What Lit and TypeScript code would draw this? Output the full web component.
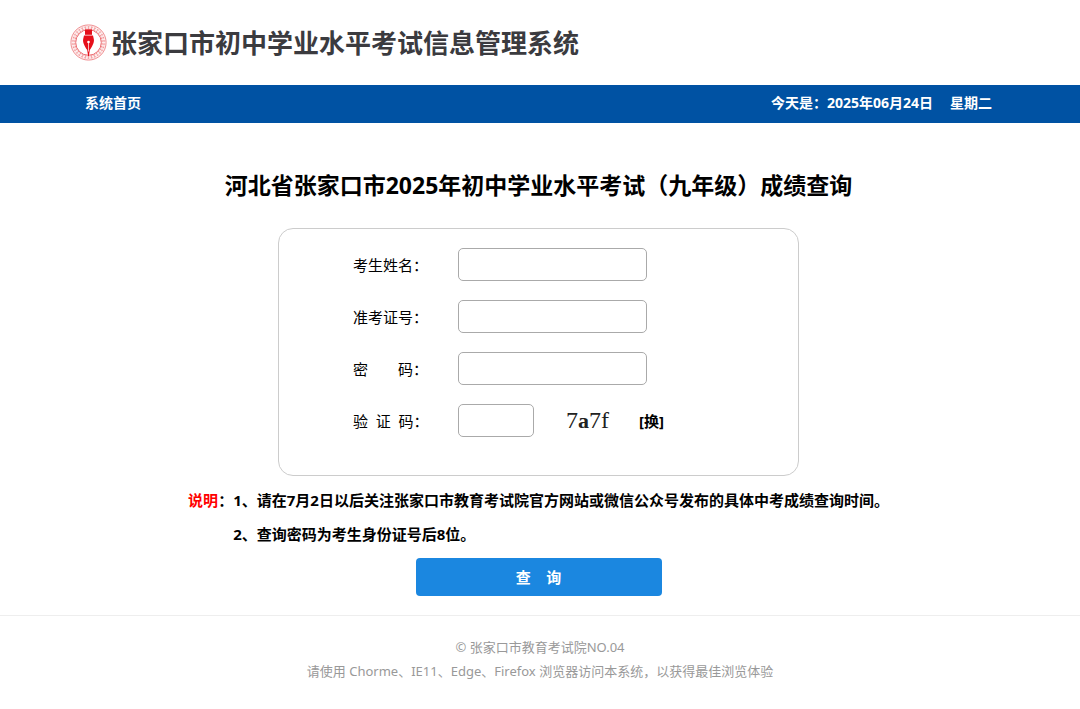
import { LitElement, html, css, svg } from "lit";
import { customElement, property } from "lit/decorators.js";

const ring = Array.from({ length: 30 }, (_, i) => i * 12);

@customElement("site-logo")
class SiteLogo extends LitElement {
  static styles = css`
    :host { display: block; flex: none; width: 37px; height: 37px; }
    svg { display: block; width: 100%; height: 100%; }
  `;
  render() {
    return html`<svg viewBox="0 0 37 37" aria-hidden="true">
      <circle cx="18.5" cy="18.5" r="17.6" fill="#fdeeee" stroke="#f08f92" stroke-width="1" />
      ${ring.map((a) => svg`<path d="M17.6 2.8h2M18.5 2.2v3.2M17.5 4.9h2" stroke="#f0888b" stroke-width=".6" fill="none" transform="rotate(${a} 18.5 18.5)" />`)}
      <circle cx="18.5" cy="18.5" r="12.8" fill="#fff" stroke="#ec6c70" stroke-width="1" />
      <path d="M15 5.500h7v5.300h-7z" fill="#e60f1a" />
      <path d="M14 11.500h9l.8 3.500c.8 3-1.500 7.500-4 11L18.900 32h-.8l-.9-6c-2.500-3.500-4.800-8-4-11z" fill="#e60f1a" />
      <path d="M18.500 18.500v9" stroke="#fff" stroke-width=".7" />
      <circle cx="18.500" cy="18" r="1.300" fill="#fff" />
    </svg>`;
  }
}

@customElement("site-header")
class SiteHeader extends LitElement {
  static styles = css`
    :host { display: block; }
    .brand { display: flex; align-items: center; gap: 4px; height: 85px; padding: 0 70px; }
    .name { margin: 0; font-size: 26px; line-height: 38px; font-weight: 700; color: #3b3b3f; white-space: nowrap; }
    .nav { display: flex; justify-content: space-between; align-items: center; padding: 0 88px 2px 85px;
      background: #0052a3; color: #fff; font-size: 14px; line-height: 36px; font-weight: 700; }
    .nav a { color: inherit; text-decoration: none; }
    .date { display: flex; gap: 17px; }
  `;
  render() {
    return html`
      <div class="brand"><site-logo></site-logo><p class="name">张家口市初中学业水平考试信息管理系统</p></div>
      <nav class="nav">
        <a href="#">系统首页</a>
        <div class="date"><span>今天是：2025年06月24日</span><span>星期二</span></div>
      </nav>`;
  }
}

@customElement("query-form")
class QueryForm extends LitElement {
  @property() code = "7a7f";

  static styles = css`
    :host { display: block; }
    form { display: flex; flex-direction: column; align-items: center; }
    .panel { box-sizing: border-box; width: 100%; max-width: 521px; padding: 19px 20px 38px 74px;
      border: 1px solid #ccc; border-radius: 15px; display: grid; gap: 19px; }
    .row { display: grid; grid-template-columns: 105px 1fr; align-items: center; }
    label { font-size: 15px; line-height: 24px; white-space: pre; }
    input { box-sizing: border-box; width: 189px; height: 33px; margin: 0; padding: 0 8px; border: 1px solid #aaa;
      border-radius: 5px; background: #fff; font: inherit; font-size: 15px; }
    .short { width: 76px; }
    .check { display: flex; align-items: center; }
    .code { margin: 0 30px 0 32px; font-family: "Liberation Serif", serif; font-size: 24px; line-height: 30px; color: #222; }
    .code b { font-size: 22px; }
    .swap { padding: 0; border: 0; background: none; color: #000; font: inherit; font-size: 15px; font-weight: 700; }
    .notes { display: grid; grid-template-columns: auto auto; margin: 7px 0; font-size: 15px; line-height: 34px; font-weight: 700; }
    .notes p { margin: 0; }
    .red { color: #f00; }
    .submit { width: 246px; height: 38px; padding: 0 0 2px; border: 0; border-radius: 4px; background: #1b87e0; color: #fff;
      font: inherit; font-size: 15px; font-weight: 700; white-space: pre; }
  `;
  render() {
    return html`<form @submit=${(e: Event) => e.preventDefault()}>
      <div class="panel">
        <div class="row"><label for="name">考生姓名：</label><input id="name" type="text" /></div>
        <div class="row"><label for="ticket">准考证号：</label><input id="ticket" type="text" /></div>
        <div class="row"><label for="pwd">密　　码：</label><input id="pwd" type="password" /></div>
        <div class="row">
          <label for="code">验&nbsp;&nbsp;证&nbsp;&nbsp;码：</label>
          <div class="check"><input id="code" class="short" type="text" /><span class="code">${[...this.code].map((c) => (c === "a" ? html`<b>${c}</b>` : c))}</span><button class="swap" type="button">[换]</button></div>
        </div>
      </div>
      <div class="notes">
        <span><span class="red">说明</span>：</span>
        <div><p>1、请在7月2日以后关注张家口市教育考试院官方网站或微信公众号发布的具体中考成绩查询时间。</p><p>2、查询密码为考生身份证号后8位。</p></div>
      </div>
      <button class="submit" type="submit">查&nbsp;&nbsp;&nbsp;&nbsp;询</button>
    </form>`;
  }
}

@customElement("app-root")
class AppRoot extends LitElement {
  static styles = css`
    :host { display: block; background: #fff; color: #000; font-family: "Noto Sans", "Noto Sans CJK SC", sans-serif; }
    main { padding: 45px 3px 19px 0; }
    h1 { margin: 0 0 26px; font-size: 23px; line-height: 34px; font-weight: 700; text-align: center; }
    footer { padding: 19px 0; border-top: 1px solid #eee; color: #999; font-size: 13px; line-height: 24px; text-align: center; }
    footer p { margin: 0; }
  `;
  render() {
    return html`
      <site-header></site-header>
      <main>
        <h1>河北省张家口市2025年初中学业水平考试（九年级）成绩查询</h1>
        <query-form></query-form>
      </main>
      <footer>
        <p>© 张家口市教育考试院NO.04</p>
        <p>请使用 Chorme、IE11、Edge、Firefox 浏览器访问本系统，以获得最佳浏览体验</p>
      </footer>`;
  }
}
